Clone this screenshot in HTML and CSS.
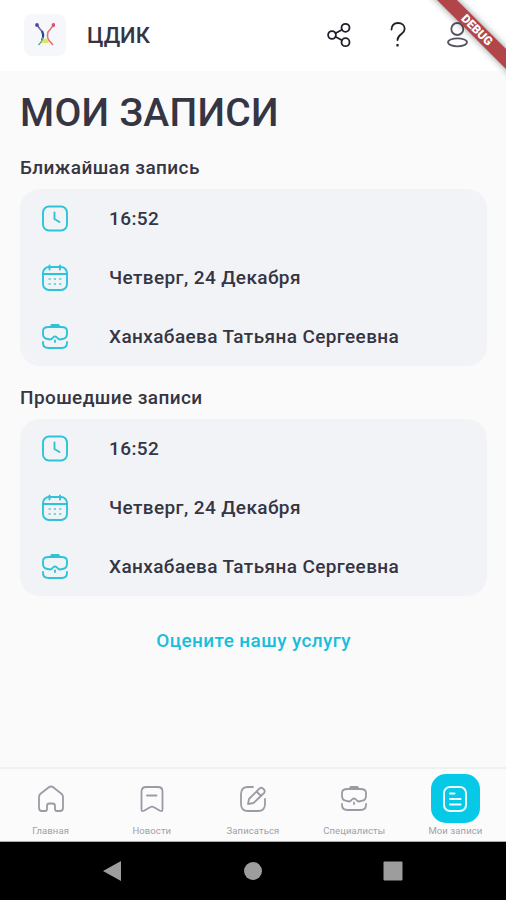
FILE: index.html
```html
<!DOCTYPE html>
<html lang="ru">
<head>
<meta charset="utf-8">
<title>Мои записи</title>
<link rel="stylesheet" href="styles.css">
</head>
<body>
<svg class="defs" width="0" height="0">
  <symbol id="clock" viewBox="0 0 28 28"><rect x="2" y="1.500" width="24" height="24" rx="6"/><path d="M13.500 7.500v6.500l5 3"/></symbol>
  <symbol id="calendar" viewBox="0 0 28 28"><rect x="2" y="3" width="24" height="23" rx="6"/><path d="M2 10h24M8.500 1.500v4M19 1.500v4"/><path class="dots" d="M7.500 15h13M7.500 20h13"/></symbol>
  <symbol id="case" viewBox="0 0 28 28"><path d="M10.800 2.400h6.500" stroke-width="3"/><path d="M7.500 4h13q5.500 0 5.500 4v2.500q0 4.500-3.500 5.200l-3.500.8q-1.500 0-2.500-1.500-2.500-3-5 0-1 1.500-2.500 1.500l-3.500-.8Q2 15 2 10.500V8q0-4 5.500-4z"/><path d="M14 17.500v1.500M2 19v1q0 5 5.500 5h13q5.500 0 5.500-5v-1"/></symbol>
</svg>
<header class="header">
  <div class="logo">
    <svg width="20" height="24" viewBox="0 0 20 24" fill="none">
      <path d="M2 2l3 4 2.500 3" stroke="#6b66a5" stroke-width="1.600"/><path d="M7 8q2.500 6-.3 9" stroke="#28449a" stroke-width="2.200"/>
      <path d="M8 14q-.2 4-4.500 8" stroke="#51ac7a" stroke-width="1.400"/>
      <path d="M18.500 2l-3 4-2.500 3q-1.500 6 1.500 9l3.500 4" stroke="#e0727e" stroke-width="1.600"/>
      <path d="M8.500 15q1.500 2 3.500 0l2 5H7z" fill="#dce665"/>
      <circle cx="2" cy="2" r="1.900" fill="#4d4a9f"/><circle cx="18.500" cy="2" r="1.900" fill="#e25263"/>
    </svg>
  </div>
  <span class="brand">ЦДИК</span>
  <div class="actions">
    <svg width="28" height="28" viewBox="0 0 28 28"><circle cx="7" cy="14" r="3.900"/><circle cx="20.500" cy="6.800" r="4"/><circle cx="20.500" cy="21.200" r="4"/><path d="M10.500 12.200l6.500-3.500M10.500 15.800l6.500 3.500"/></svg>
    <svg width="28" height="28" viewBox="0 0 28 28"><path d="M7.500 8.500C7.500 4.500 10 2 14 2s6.700 2.500 6.700 6c0 5-7.200 5-7.200 11"/><path class="question-dot" d="M13.500 23v2.500"/></svg>
    <svg class="person" width="28" height="28" viewBox="0 0 28 28"><circle cx="14.300" cy="8" r="6"/><ellipse cx="14.500" cy="21.300" rx="9.500" ry="4"/></svg>
  </div>
</header>
<div class="debug"><span>DEBUG</span></div>
<main>
  <h1>МОИ ЗАПИСИ</h1>
  <h2>Ближайшая запись</h2>
  <section class="card">
    <div class="row"><svg><use href="#clock"/></svg><span>16:52</span></div>
    <div class="row"><svg><use href="#calendar"/></svg><span>Четверг, 24 Декабря</span></div>
    <div class="row"><svg><use href="#case"/></svg><span>Ханхабаева Татьяна Сергеевна</span></div>
  </section>
  <h2>Прошедшие записи</h2>
  <section class="card">
    <div class="row"><svg><use href="#clock"/></svg><span>16:52</span></div>
    <div class="row"><svg><use href="#calendar"/></svg><span>Четверг, 24 Декабря</span></div>
    <div class="row"><svg><use href="#case"/></svg><span>Ханхабаева Татьяна Сергеевна</span></div>
  </section>
  <a class="rate">Оцените нашу услугу</a>
</main>
<nav class="tabs">
  <div class="tab"><div class="tile"><svg viewBox="0 0 28 28"><path d="M2 12q0-2 1.500-3.300L11.500 2.500q2.500-2 5 0l8 6.200Q26 10 26 12v11q0 3-3 3h-3q-2 0-2-2v-3q0-2.500-2.500-2.500h-3q-2.500 0-2.500 2.500v3q0 2-2 2H5q-3 0-3-3z"/></svg></div><span>Главная</span></div>
  <div class="tab"><div class="tile"><svg viewBox="0 0 28 28"><path d="M8 2h12q4.500 0 4.500 4.500V24q0 3-2.500 1.700l-6-3.500q-2-1-4 0l-6 3.500Q3.500 27 3.500 24V6.500Q3.500 2 8 2zM9 10.500h9.500"/></svg></div><span>Новости</span></div>
  <div class="tab"><div class="tile"><svg viewBox="0 0 28 28"><path d="M14 2H9Q2 2 2 9v10q0 7 7 7h10q7 0 7-7v-5"/><path d="M9 19l1-5L20 4q2-2.500 4.500 0t0 4.500l-10 9.500zM17.500 6.500l4.500 4.500"/></svg></div><span>Записаться</span></div>
  <div class="tab"><div class="tile"><svg><use href="#case"/></svg></div><span>Специалисты</span></div>
  <div class="tab"><div class="tile active"><svg viewBox="0 0 28 28"><rect x="3" y="2" width="22" height="24" rx="6"/><path d="M9 8.500h4.500M9 14h10.500M9 19.500h10.500"/></svg></div><span>Мои записи</span></div>
</nav>
<footer class="system">
  <svg width="20" height="22" viewBox="0 0 20 22"><path d="M0 11L18 1v20z"/></svg>
  <svg width="20" height="22" viewBox="0 0 20 22"><circle cx="10" cy="11" r="9"/></svg>
  <svg width="20" height="22" viewBox="0 0 20 22"><rect x=".5" y="1.500" width="19" height="19" rx="1"/></svg>
</footer>
</body>
</html>
```
FILE: styles.css
```css
* { box-sizing: border-box; }
body {
  position: relative;
  display: flex;
  flex-direction: column;
  width: 506px;
  height: 900px;
  margin: 0;
  overflow: hidden;
  background: #fafafb;
  color: #353543;
  font-family: Roboto, sans-serif;
  font-weight: 500;
}
svg { display: block; flex: none; }
.defs { position: absolute; }
.header {
  display: flex;
  align-items: center;
  height: 71px;
  padding: 0 35px 1px 24px;
  background: #fff;
}
.logo {
  display: grid;
  place-items: center;
  width: 42px;
  height: 42px;
  border-radius: 8px;
  background: #f6f7fa;
}
.brand { margin-left: 21px; font-size: 22px; }
.actions { display: flex; gap: 31px; margin-left: auto; }
.actions svg { fill: none; stroke: #20202a; stroke-width: 1.8; stroke-linecap: round; }
.actions .person { stroke: #555560; }
.actions .question-dot { stroke-width: 2.2; stroke-linecap: butt; }
.debug {
  position: absolute;
  top: 22.5px;
  right: -36px;
  display: grid;
  place-items: center;
  width: 130px;
  height: 14px;
  background: #b0454a;
  box-shadow: 0 0 7px rgba(0, 0, 0, .45);
  color: #fff;
  font-size: 12px;
  font-weight: 900;
  line-height: 14px;
  transform: rotate(45deg);
}
main { display: flex; flex: 1; flex-direction: column; padding: 18px 19px 0 20px; }
h1 { margin: 0; font-size: 39px; font-weight: 500; line-height: 48px; letter-spacing: .3px; }
h2 { height: 30px; margin: 17px 0 6px; font-size: 19px; font-weight: 500; line-height: 29px; letter-spacing: .4px; }
h1 + h2 { margin-top: 16px; }
.card { height: 177px; border-radius: 20px; background: #f2f3f7; }
.row { display: flex; align-items: center; height: 59px; padding-left: 21px; font-size: 19px; letter-spacing: .39px; }
.row svg { width: 28px; height: 28px; margin-right: 40px; fill: none; stroke: #2cc5d8; stroke-width: 1.9; stroke-linecap: round; }
.dots { stroke-width: 1.9; stroke-linecap: butt; stroke-dasharray: 2.2 3.1; opacity: .65; }
.rate { align-self: center; margin-top: 32px; color: #18bedb; font-size: 19px; line-height: 25px; letter-spacing: .39px; }
.tabs {
  display: grid;
  grid-template-columns: repeat(5, 1fr);
  height: 75px;
  padding-top: 5px;
  border-top: 2px solid #f0f0f2;
  border-bottom: 1px solid #aaa;
  background: #fbfbfc;
}
.tab { display: flex; flex-direction: column; align-items: center; color: #a0a0a7; font-size: 9.5px; font-weight: 400; line-height: 16px; letter-spacing: .1px; white-space: nowrap; }
.tile { display: grid; place-items: center; width: 49px; height: 49px; border-radius: 15px; }
.tile svg { width: 28px; height: 28px; fill: none; stroke: #9a9ba5; stroke-width: 1.8; stroke-linecap: round; stroke-linejoin: round; }
.tile.active { background: #05c9e6; }
.active svg { stroke: #effcff; stroke-width: 2; }
.system { display: flex; align-items: center; justify-content: center; gap: 120px; height: 58px; background: #000; }
.system svg { fill: #9d9d9d; }
```
